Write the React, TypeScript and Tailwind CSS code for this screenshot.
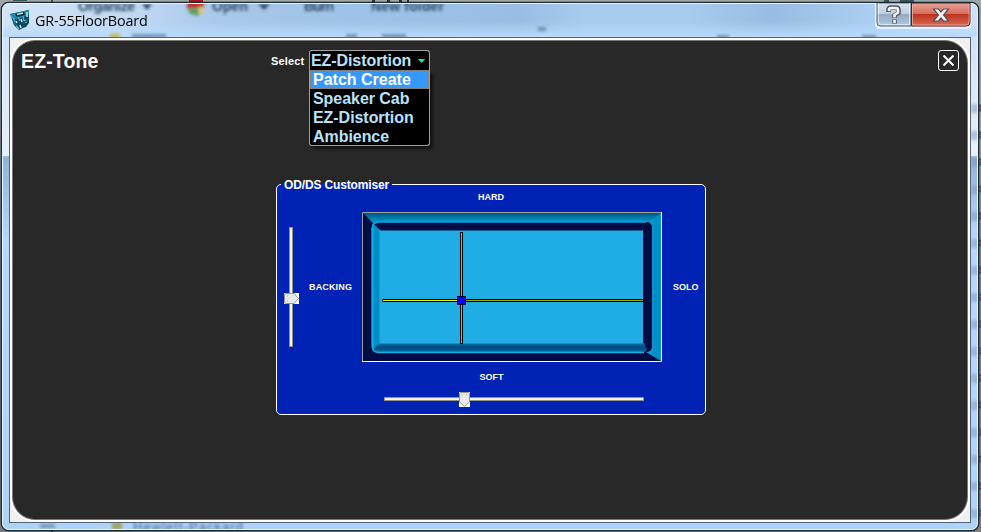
import React from "react";

const options = ["Patch Create", "Speaker Cab", "EZ-Distortion", "Ambience"];
const sideShades = [108, 135, 162, 189, 216, 243, 270, 297, 324, 351, 378, 405, 432, 459, 486, 513];

function Backdrop() {
  return (
    <svg className="absolute inset-0" width="981" height="532" aria-hidden="true">
      <defs>
        <linearGradient id="desk" x1="0" y1="0" x2="0" y2="1">
          <stop offset="0" stopColor="#9ca5a7" />
          <stop offset="0.2" stopColor="#999ea5" />
          <stop offset="0.5" stopColor="#777a80" />
          <stop offset="1" stopColor="#7b7c7e" />
        </linearGradient>
        <linearGradient id="frame" x1="0" y1="0" x2="0" y2="1">
          <stop offset="0" stopColor="#c9dff7" />
          <stop offset="0.27" stopColor="#e6eefa" />
          <stop offset="0.29" stopColor="#e6eefa" />
          <stop offset="0.292" stopColor="#91b3da" />
          <stop offset="0.45" stopColor="#b6d8fc" />
          <stop offset="1" stopColor="#afd3f8" />
        </linearGradient>
        <linearGradient id="caption" x1="0" y1="0" x2="1" y2="0">
          <stop offset="0" stopColor="#d4e4f6" />
          <stop offset="0.13" stopColor="#c1d9f3" />
          <stop offset="0.22" stopColor="#a9c8ea" />
          <stop offset="0.36" stopColor="#9fc2e8" />
          <stop offset="0.53" stopColor="#9bbde3" />
          <stop offset="0.6" stopColor="#a9cbf0" />
          <stop offset="0.7" stopColor="#a9cbf0" />
          <stop offset="0.79" stopColor="#9abce2" />
          <stop offset="0.9" stopColor="#adcff4" />
          <stop offset="1" stopColor="#cce1f8" />
        </linearGradient>
        <linearGradient id="sheen" x1="0" y1="0" x2="0" y2="1">
          <stop offset="0" stopColor="#b8dafc" stopOpacity="0" />
          <stop offset="0.55" stopColor="#b8dafc" stopOpacity="0" />
          <stop offset="1" stopColor="#b9dafb" />
        </linearGradient>
        <filter id="soft" filterUnits="userSpaceOnUse" x="0" y="0" width="981" height="532">
          <feGaussianBlur stdDeviation="1.7" />
        </filter>
        <clipPath id="win">
          <rect x="3" y="4" width="974" height="525" rx="5" />
        </clipPath>
      </defs>
      <rect width="981" height="532" fill="url(#desk)" />
      <path d="M13 0h14M52 0v2M884 1h5M900 1h14" stroke="#38565a" strokeWidth="2" />
      <path d="M372 1h3M387 1h3M399 1h3M407 1h2M44 531v-4M52 532v-2" stroke="#24333d" strokeWidth="2" />
      <rect x="189" width="14" height="2" fill="#a6191e" />
      {sideShades.map((y) => (
        <circle key={y} cx="980" cy={y} r="3" fill="#655b6c" stroke="#263e63" />
      ))}
      <rect x="1.5" y="2.5" width="977" height="528" rx="7" fill="url(#frame)" stroke="#1d292f" strokeWidth="1.6" />
      <g clipPath="url(#win)">
        <rect x="3" y="4" width="974" height="33" fill="url(#caption)" />
        <rect x="3" y="4" width="974" height="33" fill="url(#sheen)" />
        <g filter="url(#soft)">
          <g fill="#2b4763" fontSize="14" fontWeight="bold" fontFamily="Liberation Sans, sans-serif">
            <text x="78" y="11" textLength="57">Organize</text>
            <text x="212" y="11" textLength="36">Open</text>
            <text x="304" y="11" textLength="30">Burn</text>
            <text x="371" y="11" textLength="73">New folder</text>
          </g>
          <path d="M142 4h10l-5 6zM258 4h12l-6 6z" fill="#334f6d" />
          <path d="M187 2h17v7h-17z" fill="#c02a30" />
          <path d="M187 8h17l-2 5-5 3-7-2z" fill="#5d9f6b" />
          <path d="M198 7h6v6l-5 2z" fill="#d3c77b" />
          <path d="M110 36h10" stroke="#c5b95f" strokeWidth="5" />
          <path d="M132 36h34M346 36h11M382 36h24M538 29h8M717 37h12M862 37h14" stroke="#5b7b9d" strokeWidth="4" opacity="0.7" />
          <path d="M40 526h15" stroke="#7897ba" strokeWidth="4" />
          <path d="M112 526h10" stroke="#a0a55f" strokeWidth="7" />
          <text x="133" y="531" fill="#42648b" fontSize="13" textLength="110" fontFamily="Liberation Sans, sans-serif">Hewlett-Packard</text>
          {sideShades.map((y) => (
            <rect key={y} x="971" y={y - 4} width="8" height="9" fill="#7796bd" opacity="0.5" />
          ))}
        </g>
      </g>
      <rect x="2.5" y="3.5" width="975" height="526" rx="6" fill="none" stroke="#e9f5ff" />
    </svg>
  );
}

function AppIcon() {
  return (
    <svg width="22" height="22" viewBox="0 0 22 22" className="block">
      <path d="M1 5 20 1v13l-3 4-3 1-4 2-5-5z" fill="#0a4763" />
      <path d="M1 5 20 1v5L5 11z" fill="#1a86a9" />
      <path d="m6 5 9-2 1 3-8 2z" fill="#12262f" />
      <path d="m8 5.500 6-1.500" stroke="#b9e6f0" strokeWidth="1.4" />
      <path d="m1 6 4 4 1 5 4 5M9 8l2 4M14 7l1 5" stroke="#58acc9" strokeWidth="1.4" fill="none" />
      <path d="m7 12 1 2m4-4 1 3m-2 3 1 3m4-8 1 3m1-11v5" stroke="#c3e0e6" strokeWidth="1.6" />
      <path d="m5 13 2 4m7-3 5-3" stroke="#0a668b" strokeWidth="2" />
    </svg>
  );
}

function CaptionButtons() {
  return (
    <svg width="97" height="26" viewBox="0 0 97 26" className="block">
      <defs>
        <linearGradient id="help" x1="0" y1="0" x2="0" y2="1">
          <stop offset="0" stopColor="#d6e2ef" />
          <stop offset=".47" stopColor="#bfcddd" />
          <stop offset=".5" stopColor="#95aac3" />
          <stop offset="1" stopColor="#b1c8e1" />
        </linearGradient>
        <linearGradient id="close" x1="0" y1="0" x2="0" y2="1">
          <stop offset="0" stopColor="#e9a597" />
          <stop offset=".46" stopColor="#d56c5c" />
          <stop offset=".5" stopColor="#bf3322" />
          <stop offset="1" stopColor="#dc6b50" />
        </linearGradient>
      </defs>
      <path d="M1.5 0v21q0 4 4 4H91q4 0 4-4V0" fill="none" stroke="#e4f2ff" strokeWidth="3" />
      <path d="M2 0v20q0 3 3 3h31V0z" fill="url(#help)" stroke="#596b80" />
      <path d="M3.500 0v19q0 2.500 3 2.500h28V0" fill="none" stroke="#eef5fc" strokeOpacity=".7" />
      <path d="M36.500 0v23H91q4 0 4-3V0z" fill="url(#close)" stroke="#601d18" />
      <path d="M37.500 1v21H91q3 0 3-3V1" fill="none" stroke="#f2b6aa" strokeOpacity=".75" />
      <path d="M13.500 9V7q0-2.500 2.500-2.500h5q2.500 0 2.500 2.500v2.500l-4 3V15M19.500 16.500v4" fill="none" stroke="#515461" strokeWidth="4.600" />
      <path d="M14 8V7q0-2 2-2h5q2 0 2 2v2.500l-3.500 2.500v2.500M19.500 17v3" fill="none" stroke="#f3f4f4" strokeWidth="2.600" />
      <path d="M58.500 6h5l2.500 3 2.500-3h5l-5 6 5 6h-5L66 15l-2.500 3h-5l5-6z" fill="#f2f2f2" stroke="#535666" strokeWidth="1.200" />
    </svg>
  );
}

function TonePad() {
  return (
    <svg width="300" height="150" viewBox="0 0 300 150" className="block">
      <defs>
        <linearGradient id="padTop" x1="0" y1="0" x2="0" y2="1">
          <stop offset="0" stopColor="#005580" />
          <stop offset=".45" stopColor="#0078a9" />
          <stop offset="1" stopColor="#00a5dc" />
        </linearGradient>
        <linearGradient id="padSide" x1="0" y1="0" x2="1" y2="0">
          <stop offset="0" stopColor="#12aee8" />
          <stop offset=".3" stopColor="#008bc3" />
          <stop offset=".65" stopColor="#0089c2" />
          <stop offset="1" stopColor="#1eace4" />
        </linearGradient>
        <linearGradient id="padBase" x1="0" y1="0" x2="0" y2="1">
          <stop offset="0" stopColor="#007ab0" />
          <stop offset=".4" stopColor="#004c83" />
          <stop offset=".7" stopColor="#005188" />
          <stop offset="1" stopColor="#0080b5" />
        </linearGradient>
        <linearGradient id="padRight" x1="0" y1="0" x2="1" y2="0">
          <stop offset="0" stopColor="#18abe4" />
          <stop offset=".6" stopColor="#008dc7" />
          <stop offset="1" stopColor="#0094ce" />
        </linearGradient>
        <filter id="edge"><feGaussianBlur stdDeviation=".45" /></filter>
      </defs>
      <rect width="300" height="150" fill="#000b43" />
      <path d="M1 1h298l-10 10H11z" fill="url(#padTop)" />
      <path d="M299 1v148l-15-9V12z" fill="url(#padRight)" />
      <g filter="url(#edge)">
        <rect x="10" y="10" width="280" height="130" rx="5" fill="#000b43" />
        <path d="M19 19 11 11Q10 12 10 15v119q0 5 3 6l6-9V19z" fill="url(#padSide)" />
        <path d="M18 131h264l3 6q-1 3-4 3H15q-3 0-4-2z" fill="url(#padBase)" />
        <path d="M10 18q0-8 7-8h267" fill="none" stroke="#05aae5" strokeWidth="1.300" />
        <path d="M10 16v117q0 7 6 7.500h266" fill="none" stroke="#13afe9" strokeWidth="1.300" />
      </g>
      <rect x="18" y="18.500" width="263" height="113" fill="#20ace5" />
      <path d="M.5 149V.5H299" fill="none" stroke="#9b9e9d" />
      <path d="M0 149.500h299.500V0" fill="none" stroke="#fff" />
      <path d="M20 88.500h262M99.500 20v112" stroke="#000" strokeWidth="3" />
      <path d="M21 88.500h75" stroke="#f4ee00" />
      <path d="M103 88.500h178" stroke="#aaa600" />
      <path d="M99.500 21v110" stroke="#b8b432" />
      <rect x="95.500" y="84.500" width="8" height="8" fill="#0000f5" stroke="#00002f" />
    </svg>
  );
}

function VerticalSlider() {
  return (
    <svg width="16" height="122" viewBox="0 0 16 122" className="block">
      <rect x="5.500" y=".5" width="3" height="119" fill="#f5f5ee" stroke="#929189" />
      <path d="M0 66h15v11H0z" fill="#fff" />
      <path d="M.5 67.500 2 66.500h8l4.500 5-4.500 5H2l-1.500-1z" fill="#e9e9e6" stroke="#929392" />
      <path d="M3 69h1M3 74h1" stroke="#aaa" />
    </svg>
  );
}

function HorizontalSlider() {
  return (
    <svg width="260" height="16" viewBox="0 0 260 16" className="block">
      <rect x=".5" y="5.500" width="259" height="3" fill="#f5f5ee" stroke="#929189" />
      <path d="M75 0h11v15H75z" fill="#fff" />
      <path d="m76.500.5-1 1.500v8l5 4.500 5-4.500V2l-1-1.500z" fill="#e9e9e6" stroke="#929392" />
      <path d="M78 3h1M82 3h1" stroke="#aaa" />
    </svg>
  );
}

function Selector() {
  return (
    <div className="relative w-[121px]">
      <button className="flex h-5 w-full items-center justify-between rounded-t-[3px] border border-b-0 border-[#a1a1a1] bg-black pr-1 pl-px text-[16px] leading-5 font-bold tracking-[-.08px] text-[#b9e2fa]">
        <span>EZ-Distortion</span>
        <svg width="7" height="4" viewBox="0 0 7 4"><path d="M0 0h7L3.500 4z" fill="#00efc1" /></svg>
      </button>
      <ul className="absolute top-5 left-0 h-[76px] w-[121px] rounded-b-[3px] border border-t-0 border-[#a1a1a1] bg-black text-[16px] leading-[19px] font-bold text-[#b9e2fa] shadow-[3px_3px_3px_#0008]">
        {options.map((item, i) => (
          <li key={item} className={i === 0 ? "h-[19px] bg-[#3399ff] pl-[3px] text-white outline outline-1 -outline-offset-1 outline-dotted outline-[#b7672099]" : "h-[19px] pl-[3px] tracking-[-.05px]"}>
            {item}
          </li>
        ))}
      </ul>
    </div>
  );
}

export default function App() {
  return (
    <div className="relative h-[532px] w-[981px] overflow-hidden font-['Liberation_Sans',Arial,sans-serif]">
      <Backdrop />
      <div className="relative flex h-full flex-col px-[9px] pt-[3px] pb-[9px]">
        <header className="flex h-[34px] shrink-0 items-start">
          <div className="mt-[6px]"><AppIcon /></div>
          <h1 className="mt-[7px] ml-[4px] origin-left scale-x-[.96] font-['Open_Sans','Noto_Sans',sans-serif] text-[15px] leading-5 tracking-[-0.2px] whitespace-nowrap text-black">GR-55FloorBoard</h1>
          <div className="ml-auto"><CaptionButtons /></div>
        </header>
        <main className="h-[486px] w-[962px] border border-[#536476] bg-[#f0f0f0] p-[2px]">
          <div className="h-full rounded-[23px] border border-[#777] bg-[#282828] text-white shadow-[0_0_0_2px_white]">
            <div className="flex h-[144px] items-start pt-[9px] pl-[8px]">
              <h2 className="w-[250px] text-[19.500px] leading-[23px] font-bold tracking-[.15px]">EZ-Tone</h2>
              <span className="mt-[4px] w-[38px] text-[11px] leading-[14px] font-bold tracking-[.15px]">Select</span>
              <Selector />
              <button className="mr-[8px] ml-auto flex h-[21px] w-[21px] items-center justify-center rounded-[3px] border border-white" aria-label="Close">
                <svg width="11" height="11" viewBox="0 0 11 11"><path d="m.5.5 10 10m0-10-10 10" stroke="white" strokeWidth="2" /></svg>
              </button>
            </div>
            <fieldset className="mt-[-8px] ml-[263px] h-[238px] w-[430px] rounded-[5px] border border-white bg-[#0022b5] text-[9px] leading-3 font-bold">
              <legend className="ml-[4px] h-[14px] px-[3px] text-[12px] leading-[16px] tracking-[-.15px] whitespace-nowrap">OD/DS Customiser</legend>
              <div className="flex h-[164px]">
                <div className="mt-[36px] ml-[7px] w-[25px]"><VerticalSlider /></div>
                <span className="mt-[90px] w-[53px] tracking-[.15px]">BACKING</span>
                <div className="w-[300px] text-center">
                  <div className="h-[21px] pr-[42px]">HARD</div>
                  <TonePad />
                </div>
                <span className="mt-[90px] ml-[11px]">SOLO</span>
              </div>
              <div className="ml-[85px] h-[37px] w-[300px] pt-[16px] pr-[41px] text-center">SOFT</div>
              <div className="ml-[107px]"><HorizontalSlider /></div>
            </fieldset>
          </div>
        </main>
      </div>
    </div>
  );
}
